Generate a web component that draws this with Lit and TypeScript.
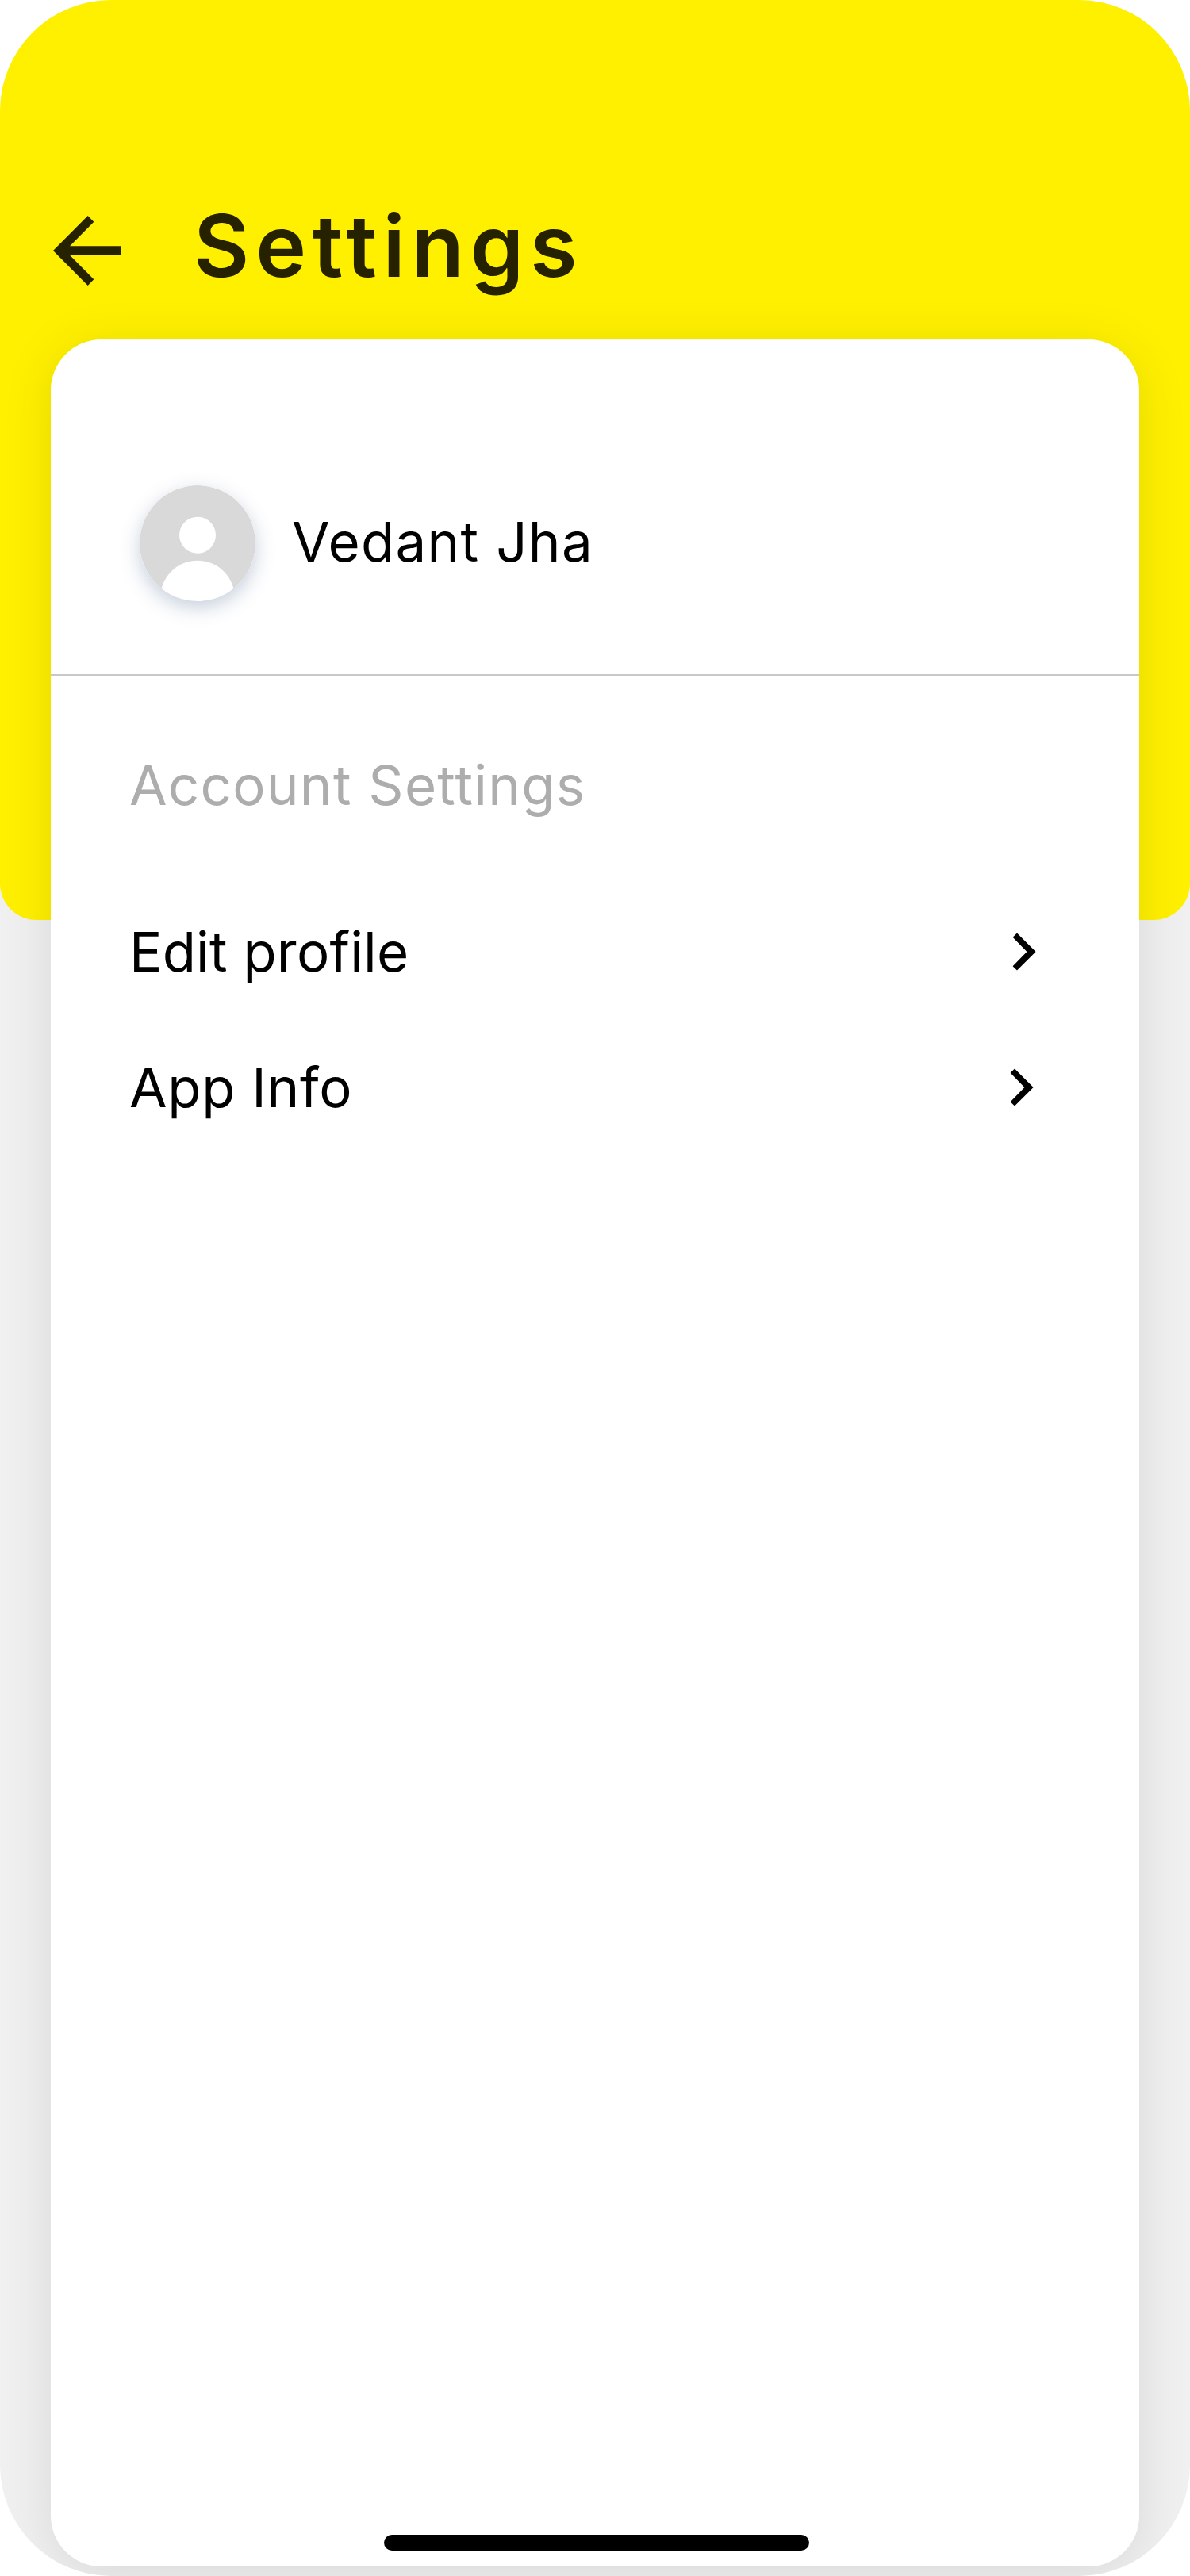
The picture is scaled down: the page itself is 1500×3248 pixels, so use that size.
import { LitElement, html, css, svg } from "lit";
import { customElement, property } from "lit/decorators.js";

@customElement("menu-row")
export class MenuRow extends LitElement {
  @property() label = "";

  static styles = css`
    :host {
      display: flex;
      align-items: center;
      justify-content: space-between;
      height: 100px;
      font: 400 69px/100px Inter, Roboto, "Liberation Sans", sans-serif;
      color: #000;
      white-space: nowrap;
    }
    .chevron {
      display: block;
      width: 30px;
      height: 48px;
      flex: none;
    }
  `;

  render() {
    return html`
      <span>${this.label}</span>
      <svg class="chevron" viewBox="0 0 30 48">
        <path d="M6 0.4 L29.6 24 L6 47.6 L0.6 42.2 L18.4 24 L0.6 5.8 Z" />
      </svg>
    `;
  }
}

@customElement("app-root")
export class AppRoot extends LitElement {
  static styles = css`
    :host {
      display: block;
      width: 1500px;
      height: 3248px;
      background: #fff;
      font-family: Inter, Roboto, "Liberation Sans", sans-serif;
    }
    * {
      box-sizing: border-box;
    }
    .screen {
      display: grid;
      grid-template-rows: 1160px 1fr;
      height: 3248px;
      border-radius: 140px;
      overflow: hidden;
      background: #f0f0f0;
    }
    .banner {
      grid-area: 1 / 1 / 2 / 2;
      background: #fff000;
      border-radius: 0 0 46px 46px;
    }
    .content {
      grid-area: 1 / 1 / 3 / 2;
      display: flex;
      flex-direction: column;
      padding: 0 64px 12px;
    }
    .topbar {
      display: flex;
      align-items: flex-start;
      height: 428px;
      padding: 240px 0 0 2px;
    }
    .back {
      width: 88px;
      height: 90px;
      margin: 31px 90px 0 0;
      flex: none;
      fill: #262200;
    }
    .title {
      margin: 2px 0 0;
      font-weight: 600;
      font-size: 108px;
      line-height: 136px;
      letter-spacing: 7.9px;
      color: #262200;
      white-space: nowrap;
    }
    .card {
      flex: 1;
      display: flex;
      flex-direction: column;
      border-radius: 64px;
      background: #fff;
      box-shadow: 0 8px 64px rgba(0, 0, 0, 0.1);
    }
    .profile {
      display: flex;
      align-items: center;
      height: 424px;
      padding: 168px 112px 76px;
      border-bottom: 2px solid #c8c8c8;
      gap: 46px;
    }
    .avatar {
      width: 146px;
      height: 146px;
      border-radius: 50%;
      flex: none;
      box-shadow: 0 8px 24px rgba(50, 84, 130, 0.28);
    }
    .name {
      padding-bottom: 4px;
      font-size: 69px;
      line-height: 100px;
      letter-spacing: 1.3px;
      color: #000;
      white-space: nowrap;
    }
    .account {
      display: flex;
      flex-direction: column;
      padding: 88px 130px 0 99px;
    }
    .heading {
      margin: 0 0 110px;
      font-weight: 400;
      font-size: 69px;
      line-height: 100px;
      letter-spacing: 1.25px;
      color: #adadad;
      white-space: nowrap;
    }
    .edit {
      letter-spacing: 0.2px;
      margin-bottom: 71px;
    }
    .info {
      letter-spacing: 0.7px;
      margin-right: 3px;
    }
    .home {
      width: 536px;
      height: 20px;
      border-radius: 10px;
      background: #000;
      margin: auto auto 20px 420px;
    }
  `;

  private avatar() {
    return svg`
      <clipPath id="disc"><circle cx="73" cy="73" r="73" /></clipPath>
      <g clip-path="url(#disc)">
        <rect width="146" height="146" fill="#d9d9d9" />
        <circle cx="73" cy="62.8" r="23" fill="#fff" />
        <circle cx="73" cy="141.5" r="46.8" fill="#fff" />
      </g>
    `;
  }

  render() {
    return html`
      <div class="screen">
        <div class="banner"></div>
        <div class="content">
          <header class="topbar">
            <svg class="back" viewBox="66 271 88 90">
              <path
                d="M67 316 L110.7 272 L118.3 279.8 L88 310.2 H152 V321.8 H88 L118.3 352.2 L110.7 360 Z"
              />
            </svg>
            <h1 class="title">Settings</h1>
          </header>
          <main class="card">
            <section class="profile">
              <svg class="avatar" viewBox="0 0 146 146">${this.avatar()}</svg>
              <span class="name">Vedant Jha</span>
            </section>
            <section class="account">
              <h2 class="heading">Account Settings</h2>
              <menu-row class="edit" label="Edit profile"></menu-row>
              <menu-row class="info" label="App Info"></menu-row>
            </section>
            <div class="home"></div>
          </main>
        </div>
      </div>
    `;
  }
}
